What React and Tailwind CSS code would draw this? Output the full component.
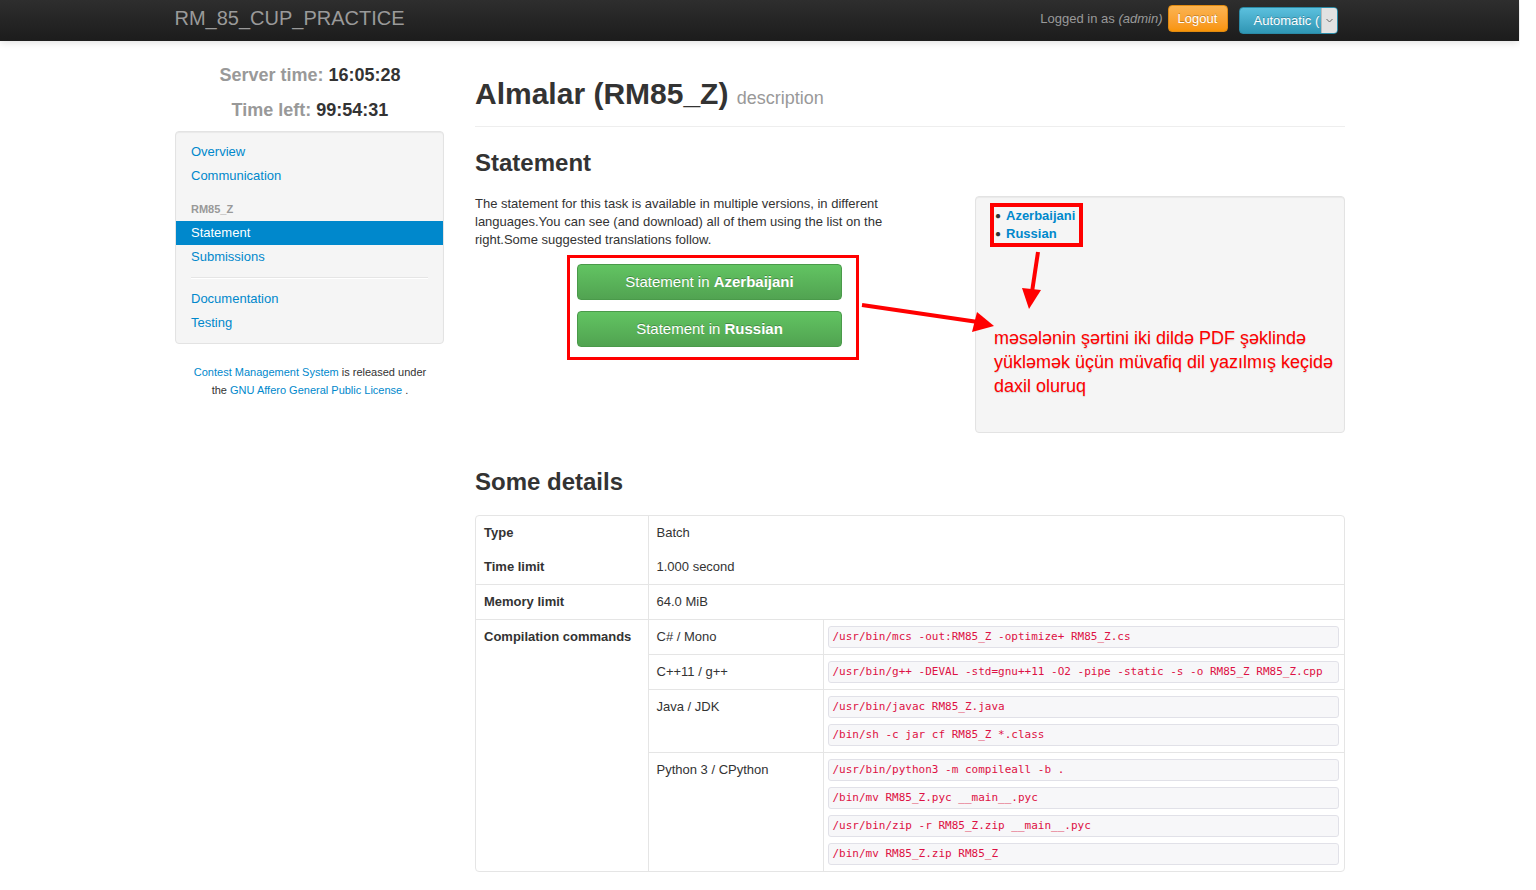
import React from 'react';

const codeRows = [
    { lang: 'C# / Mono', cmds: ['/usr/bin/mcs -out:RM85_Z -optimize+ RM85_Z.cs'] },
    { lang: 'C++11 / g++', cmds: ['/usr/bin/g++ -DEVAL -std=gnu++11 -O2 -pipe -static -s -o RM85_Z RM85_Z.cpp'] },
    { lang: 'Java / JDK', cmds: ['/usr/bin/javac RM85_Z.java', '/bin/sh -c jar cf RM85_Z *.class'] },
    {
        lang: 'Python 3 / CPython',
        cmds: [
            '/usr/bin/python3 -m compileall -b .',
            '/bin/mv RM85_Z.pyc __main__.pyc',
            '/usr/bin/zip -r RM85_Z.zip __main__.pyc',
            '/bin/mv RM85_Z.zip RM85_Z',
        ],
    },
];

const NavLink = ({ children, active }) => (
    <div className={`px-[15px] py-[3px] leading-[18px] ${active ? 'bg-[#0088cc] text-white' : 'text-[#0088cc]'}`}>
        {children}
    </div>
);

const Navbar = () => (
    <div className="h-[41px] bg-gradient-to-b from-[#2e2e2e] to-[#1c1c1c] shadow-[0_1px_8px_rgba(0,0,0,0.15)] w-[1519px]">
        <div className="w-[1170px] mx-auto flex items-start justify-between">
            <div className="text-[20px] leading-[20px] text-[#9a9a9a] mt-[8px]">RM_85_CUP_PRACTICE</div>
            <div className="flex items-start mr-[7px]">
                <span className="text-[13px] leading-[18px] text-[#999] mt-[10px]">
                    Logged in as <i>(admin)</i>
                </span>
                <button className="ml-[5px] mt-[5px] h-[27px] w-[60px] rounded-[4px] bg-gradient-to-b from-[#fbb450] to-[#f89406] border border-[#e08a10] text-white text-[13px] leading-[18px] [text-shadow:0_-1px_0_rgba(0,0,0,0.25)]">
                    Logout
                </button>
                <div className="ml-[11px] mt-[7px] h-[27px] w-[99px] rounded-[4px] bg-gradient-to-b from-[#5bc0de] to-[#2f96b4] border border-[#2a8aa6] flex items-stretch overflow-hidden">
                    <span className="flex-1 text-white text-[13px] leading-[25px] pl-[14px] [text-shadow:0_-1px_0_rgba(0,0,0,0.25)] whitespace-nowrap overflow-hidden">
                        Automatic (
                    </span>
                    <span className="w-[16px] bg-[#e2e2e2] border-l border-[#bbb] flex items-center justify-center">
                        <svg width="7" height="5" viewBox="0 0 7 5"><path d="M0.5 1 L3.5 4 L6.5 1" fill="none" stroke="#666" strokeWidth="1" /></svg>
                    </span>
                </div>
            </div>
        </div>
    </div>
);

const Sidebar = () => (
    <div className="w-[270px] shrink-0">
        <div className="text-center font-bold text-[18px] leading-[35px] mt-[17px]">
            <div><span className="text-[#999]">Server time:</span> <span className="text-[#333]">16:05:28</span></div>
            <div><span className="text-[#999]">Time left:</span> <span className="text-[#333]">99:54:31</span></div>
        </div>
        <div className="mt-[3px] w-[269px] bg-[#f5f5f5] border border-[#e3e3e3] rounded-[4px] shadow-[inset_0_1px_1px_rgba(0,0,0,0.05)] py-[8px] text-[13px]">
            <NavLink>Overview</NavLink>
            <NavLink>Communication</NavLink>
            <div className="mt-[9px] px-[15px] py-[3px] leading-[18px] text-[11px] font-bold text-[#999]">RM85_Z</div>
            <NavLink active>Statement</NavLink>
            <NavLink>Submissions</NavLink>
            <div className="mx-[15px] mt-[8px] mb-[8px] h-px bg-[#e5e5e5] border-b border-white box-content" />
            <NavLink>Documentation</NavLink>
            <NavLink>Testing</NavLink>
        </div>
        <div className="mt-[19px] text-center text-[11px] leading-[18px] text-[#333]">
            <span className="text-[#0088cc]">Contest Management System</span> is released under
            <br />
            the <span className="text-[#0088cc]">GNU Affero General Public License</span> .
        </div>
    </div>
);

const GreenButton = ({ lang }) => (
    <div className="w-[265px] h-[36px] rounded-[4px] bg-gradient-to-b from-[#62c462] to-[#51a351] border border-[#4a9a4a] text-white text-[15px] leading-[34px] text-center [text-shadow:0_-1px_0_rgba(0,0,0,0.25)]">
        Statement in <b>{lang}</b>
    </div>
);

const Main = () => (
    <div className="w-[870px] text-[#333] text-[13px]">
        <div className="mt-[33px] pb-[8px] border-b border-[#eee]">
            <h1 className="text-[30px] leading-[40px] font-bold">
                Almalar (RM85_Z) <span className="text-[18px] font-normal text-[#999]">description</span>
            </h1>
        </div>
        <h2 className="mt-[16px] text-[24px] leading-[40px] font-bold">Statement</h2>
        <div className="mt-[12px] flex gap-[30px]">
            <div className="w-[470px]">
                <p className="leading-[18px]">
                    The statement for this task is available in multiple versions, in different languages.You can see (and download) all of them using the list on the right.Some suggested translations follow.
                </p>
                <div className="mt-[6px] ml-[92px] w-[292px] border-[3px] border-[#ff0000] pl-[7px] pt-[6px] pb-[10px] flex flex-col gap-[11px]">
                    <GreenButton lang="Azerbaijani" />
                    <GreenButton lang="Russian" />
                </div>
            </div>
            <div className="mt-[1px] w-[370px] h-[237px] bg-[#f5f5f5] border border-[#e3e3e3] rounded-[4px] shadow-[inset_0_1px_1px_rgba(0,0,0,0.05)] pl-[14px] pt-[6px]">
                <div className="inline-block border-[4px] border-[#ff0000] pr-[4px] text-[13px] leading-[18px] font-bold text-[#0088cc]">
                    <div className="flex items-center"><span className="w-[12px] pl-[1px] text-[#333] text-[10px]">●</span>Azerbaijani</div>
                    <div className="flex items-center"><span className="w-[12px] pl-[1px] text-[#333] text-[10px]">●</span>Russian</div>
                </div>
                <div className="mt-[79px] ml-[4px] text-[18px] leading-[24px] text-[#ff0000] whitespace-nowrap [text-shadow:0_1px_1px_rgba(0,0,0,0.15)]">
                    məsələnin şərtini iki dildə PDF şəklində
                    <br />
                    yükləmək üçün müvafiq dil yazılmış keçidə
                    <br />
                    daxil oluruq
                </div>
            </div>
        </div>
        <h2 className="mt-[29px] text-[24px] leading-[40px] font-bold">Some details</h2>
        <div className="mt-[13px] border border-[#e5e5e5] rounded-[4px] overflow-hidden">
            <table className="w-full table-fixed border-collapse text-[13px] leading-[18px]">
                <colgroup>
                    <col className="w-[172px]" />
                    <col className="w-[175px]" />
                    <col />
                </colgroup>
                <tbody>
                    <tr>
                        <th className="text-left font-bold p-[8px]">Type</th>
                        <td colSpan={2} className="border-l border-[#e5e5e5] p-[8px]">Batch</td>
                    </tr>
                    <tr>
                        <th className="text-left font-bold p-[8px]">Time limit</th>
                        <td colSpan={2} className="border-l border-[#e5e5e5] p-[8px]">1.000 second</td>
                    </tr>
                    <tr className="border-t border-[#e5e5e5]">
                        <th className="text-left font-bold p-[8px]">Memory limit</th>
                        <td colSpan={2} className="border-l border-[#e5e5e5] p-[8px]">64.0 MiB</td>
                    </tr>
                    {codeRows.map((row, i) => (
                        <tr key={row.lang} className="border-t border-[#e5e5e5]">
                            {i === 0 && (
                                <th rowSpan={codeRows.length} className="text-left align-top font-bold p-[8px]">
                                    Compilation commands
                                </th>
                            )}
                            <td className="align-top border-l border-[#e5e5e5] p-[8px]">{row.lang}</td>
                            <td className="align-top border-l border-[#e5e5e5] pl-[4px] pr-[5px] pt-[6px] pb-[6px]">
                                <div className="flex flex-col gap-[6px]">
                                    {row.cmds.map(cmd => (
                                        <div
                                            key={cmd}
                                            className="h-[22px] bg-[#f7f7f9] border border-[#e1e1e8] rounded-[3px] pl-[4px] text-[11px] leading-[20px] text-[#dd1144] font-['DejaVu_Sans_Mono',monospace] whitespace-pre overflow-hidden"
                                        >
                                            {cmd}
                                        </div>
                                    ))}
                                </div>
                            </td>
                        </tr>
                    ))}
                </tbody>
            </table>
        </div>
    </div>
);

// annotation arrows drawn over the page
const Arrows = () => (
    <svg className="absolute left-0 top-0 pointer-events-none" width="1520" height="890">
        <line x1="862" y1="305" x2="978" y2="322" stroke="#ff0000" strokeWidth="4" />
        <polygon points="994,326 977,312 972,332" fill="#ff0000" />
        <line x1="1038" y1="252" x2="1032" y2="292" stroke="#ff0000" strokeWidth="4" />
        <polygon points="1029,309 1022,288 1041,290" fill="#ff0000" />
    </svg>
);

const App = () => (
    <div className="relative w-[1520px] h-[890px] overflow-hidden bg-white font-['Liberation_Sans',Arial,sans-serif]">
        <Navbar />
        <div className="w-[1170px] mx-auto flex gap-[30px]">
            <Sidebar />
            <Main />
        </div>
        <Arrows />
    </div>
);

export default App;
